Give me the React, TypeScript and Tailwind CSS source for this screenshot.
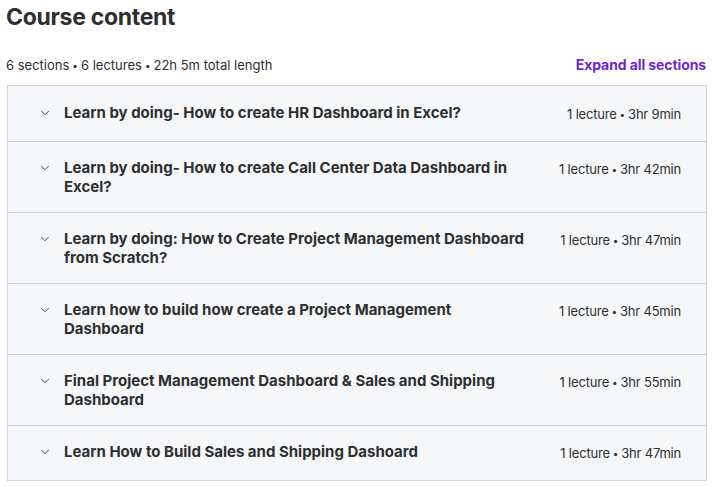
import React from 'react';
import { ChevronDown } from 'lucide-react';

const sections = [
  { title: 'Learn by doing- How to create HR Dashboard in Excel?', lectures: '1 lecture', length: '3hr 9min' },
  { title: 'Learn by doing- How to create Call Center Data Dashboard in Excel?', lectures: '1 lecture', length: '3hr 42min' },
  { title: 'Learn by doing: How to Create Project Management Dashboard from Scratch?', lectures: '1 lecture', length: '3hr 47min' },
  { title: 'Learn how to build how create a Project Management Dashboard', lectures: '1 lecture', length: '3hr 45min' },
  { title: 'Final Project Management Dashboard & Sales and Shipping Dashboard', lectures: '1 lecture', length: '3hr 55min' },
  { title: 'Learn How to Build Sales and Shipping Dashoard', lectures: '1 lecture', length: '3hr 47min' },
];

const Dot = () => <span className="relative -top-[1px] text-[10px] mx-[3px]">•</span>;

const App: React.FC = () => {
  return (
    <div className="w-[712px] bg-white text-[#2d2f31] font-['Inter',sans-serif]">
      {/* Header */}
      <h2 className="pl-[6px] pt-[2px] text-[23px] leading-[30px] font-bold tracking-[-0.3px]">Course content</h2>

      <div className="flex items-center justify-between pl-[6px] pr-[6px] mt-[24px] h-[18px]">
        <span className="text-[13px] leading-[18px]">
          6 sections<Dot />6 lectures<Dot />22h 5m total length
        </span>
        <button className="text-[14px] leading-[18px] font-bold text-[#6d28d2] tracking-[-0.1px]">
          Expand all sections
        </button>
      </div>

      {/* Sections */}
      <div className="ml-[7px] mr-[5px] mt-[11px] border border-[#d1d2e0]">
        {sections.map((s, i) => (
          <div
            key={s.title}
            className={`flex items-center min-h-[55px] bg-[#f6f7f9] pl-[30px] pr-[25px] py-[16px] ${i > 0 ? 'border-t border-[#d1d2e0]' : ''}`}
          >
            <div className="flex items-start w-full">
              <ChevronDown className="w-[14px] h-[14px] mt-[3px] flex-shrink-0 text-[#2d2f31]" strokeWidth={1.5} />
              <div className="ml-[12px] w-[470px] text-[15px] leading-[19px] font-bold">{s.title}</div>
              <div className="ml-auto pt-[2px] text-[13px] leading-[19px] tracking-[-0.2px] whitespace-nowrap">
                {s.lectures}<Dot />{s.length}
              </div>
            </div>
          </div>
        ))}
      </div>
    </div>
  );
};

export default App;
